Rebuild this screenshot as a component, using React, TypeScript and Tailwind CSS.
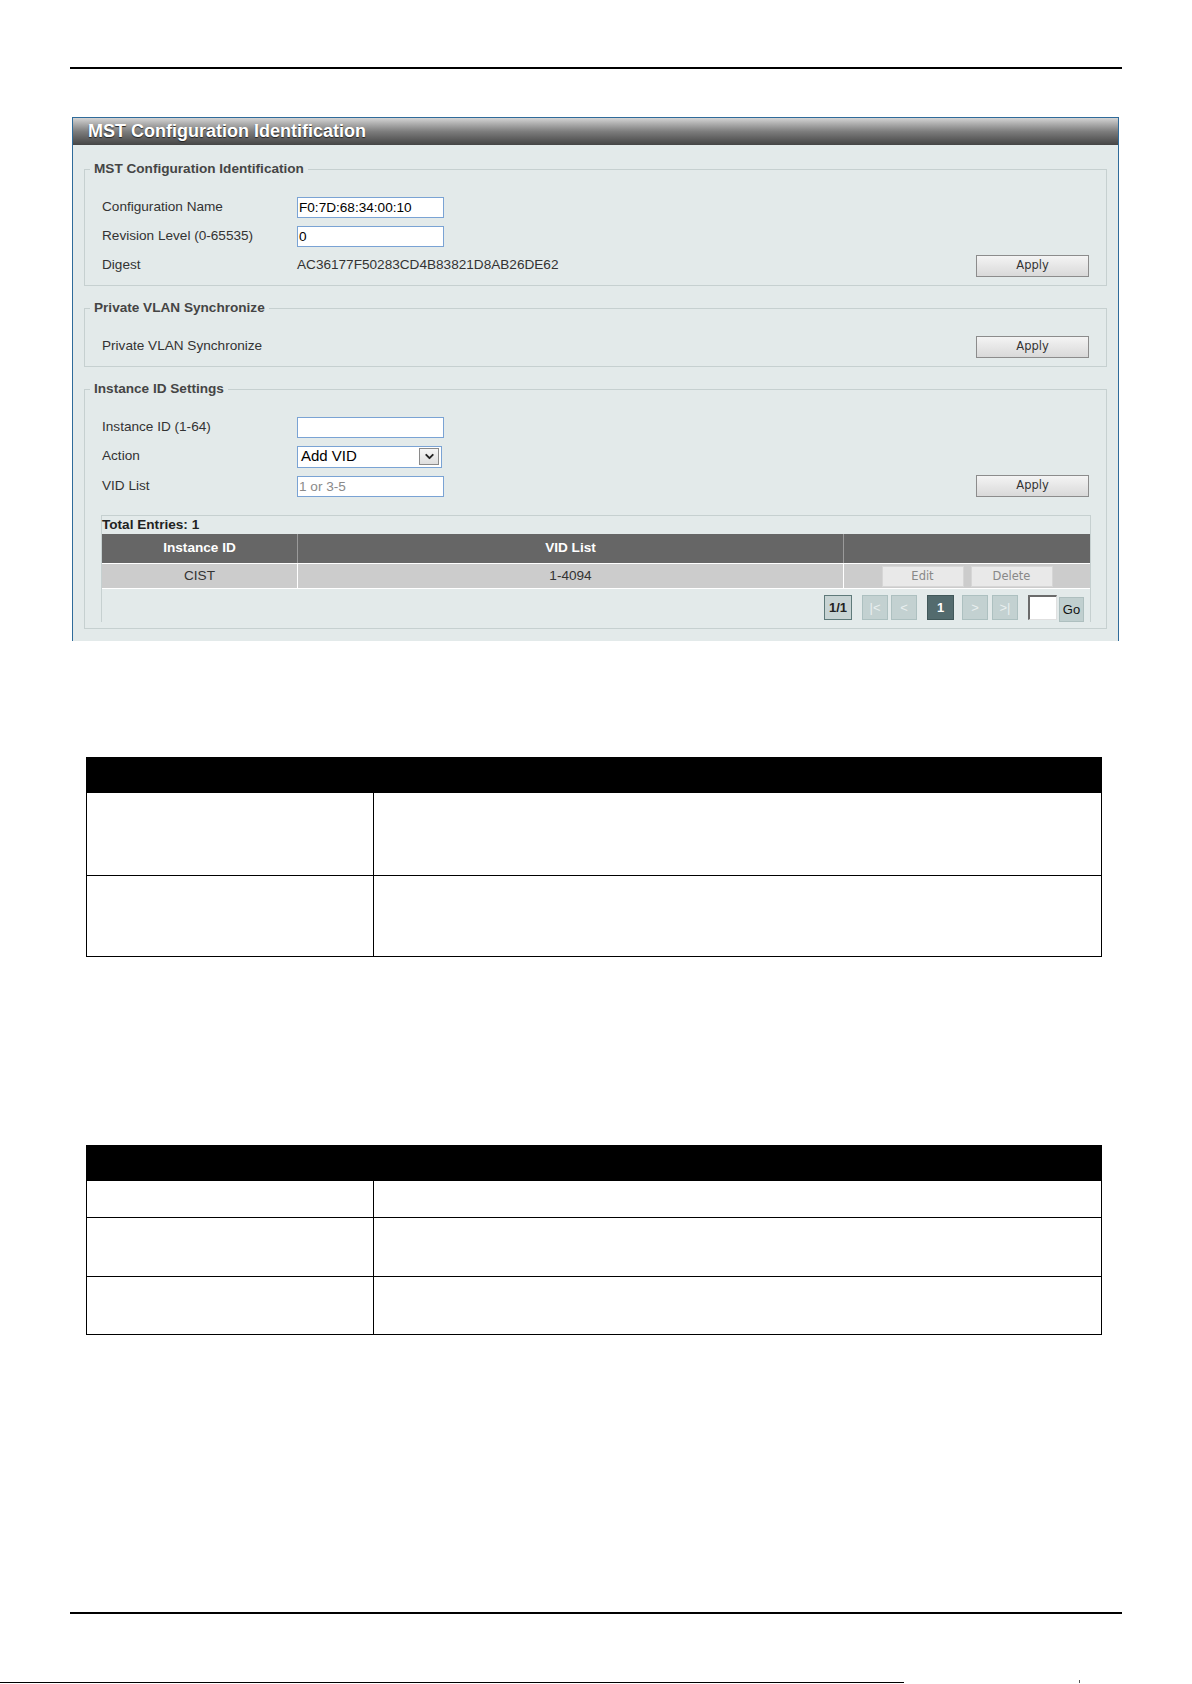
import { ChevronDown } from 'lucide-react';

const label = 'w-[195px] shrink-0 text-[13.6px] text-[#333]';
const field = 'w-[147px] h-[21px] border border-[#7aa3d4] bg-white px-[1px] text-[13.6px] leading-[19px]';

function ApplyButton() {
  return (
    <button className="ml-auto w-[113px] h-[22px] border border-[#8c8c8c] bg-gradient-to-b from-[#f4f4f4] to-[#d9d9d9] font-['DejaVu_Sans',sans-serif] text-[11.5px] text-[#333]">
      Apply
    </button>
  );
}

function Group({ title, className, children }: { title: string; className: string; children: React.ReactNode }) {
  return (
    <fieldset className={`border border-[#c6d0d0] px-[17px] ${className}`}>
      <legend className="-ml-[12px] px-[4px] text-[13.6px] leading-[16px] font-bold text-[#454545]">{title}</legend>
      {children}
    </fieldset>
  );
}

function PageBox({ children, tone }: { children: React.ReactNode; tone: 'off' | 'on' | 'count' | 'go' }) {
  const styles = {
    off: 'w-[26px] bg-[#c3d1d1] border-[#adc0c0] text-[#e9efef]',
    on: 'w-[27px] bg-[#536b6e] border-[#41585a] text-white font-bold',
    count: 'w-[28px] bg-[#c8d4d4] border-[#5f7a7a] text-[#222] font-bold border-[1.5px]',
    go: 'w-[25px] bg-[#c0cfcf] border-[#aebfbf] text-[#111]',
  }[tone];
  return (
    <div className={`h-[25px] flex items-center justify-center border text-[13px] ${styles}`}>{children}</div>
  );
}

function DocTable({ rows, className }: { rows: number[]; className: string }) {
  return (
    <div className={`shrink-0 ml-[86px] w-[1016px] border-x border-b border-black ${className}`}>
      <div className="h-[36px] bg-black" />
      {rows.map((h, i) => (
        <div
          key={i}
          className={`grid grid-cols-[287px_1fr] ${i > 0 ? 'border-t border-black' : ''}`}
          style={{ height: h }}
        >
          <div className="border-r-[1.5px] border-black" />
          <div />
        </div>
      ))}
    </div>
  );
}

export default function App() {
  return (
    <div className="w-[1192px] h-[1684px] bg-white flex flex-col overflow-hidden font-['Liberation_Sans',Arial,sans-serif]">
      <div className="shrink-0 mt-[67px] mx-[70px] h-[2px] bg-black" />

      <section className="shrink-0 mt-[48px] ml-[72px] w-[1047px] h-[524px] flex flex-col border-t border-x border-[#2f6b9a]">
        <div className="h-[27px] shrink-0 flex items-center pl-[15px] bg-gradient-to-b from-[#d4d4d4] via-[#7d7d7d] to-[#454545]">
          <h1 className="text-[18px] font-bold text-white leading-none -mt-px [text-shadow:0_1px_1px_#222]">
            MST Configuration Identification
          </h1>
        </div>

        <div className="flex-1 bg-[#e3eaea] px-[11px] pb-[11px] flex flex-col">
          <Group title="MST Configuration Identification" className="mt-[16px] pt-[16px] pb-[5px]">
            <div className="h-[29px] flex items-center">
              <span className={label}>Configuration Name</span>
              <div className={`${field} text-black`}>F0:7D:68:34:00:10</div>
            </div>
            <div className="h-[29px] flex items-center">
              <span className={label}>Revision Level (0-65535)</span>
              <div className={`${field} text-black`}>0</div>
            </div>
            <div className="h-[29px] flex items-center">
              <span className={label}>Digest</span>
              <span className="text-[13.6px] text-[#333]">AC36177F50283CD4B83821D8AB26DE62</span>
              <ApplyButton />
            </div>
          </Group>

          <Group title="Private VLAN Synchronize" className="mt-[14px] pt-[16px] pb-[5px]">
            <div className="h-[29px] flex items-center">
              <span className={label}>Private VLAN Synchronize</span>
              <ApplyButton />
            </div>
          </Group>

          <Group title="Instance ID Settings" className="mt-[14px] pt-[15px] pb-[6px]">
            <div className="h-[30px] flex items-center">
              <span className={label}>Instance ID (1-64)</span>
              <div className={field} />
            </div>
            <div className="h-[29px] flex items-center">
              <span className={label}>Action</span>
              <div className="w-[145px] h-[22px] flex items-center justify-between border border-[#7aa3d4] bg-white pl-[3px] pr-[2px]">
                <span className="text-[15px] text-black">Add VID</span>
                <span className="w-[20px] h-[17px] flex items-center justify-center border border-[#8a8a8a] bg-gradient-to-b from-[#f6f6f6] to-[#dedede]">
                  <ChevronDown size={13} strokeWidth={3.5} className="text-[#222]" />
                </span>
              </div>
            </div>
            <div className="h-[30px] flex items-center">
              <span className={label}>VID List</span>
              <div className={`${field} text-[#8a8a8a]`}>1 or 3-5</div>
              <ApplyButton />
            </div>

            <div className="mt-[14px] -ml-px -mr-[2px] border-t border-x border-[#c6d0d0]">
              <div className="h-[18px] flex items-center text-[13.6px] font-bold text-[#222]">Total Entries: 1</div>
              <div className="grid grid-cols-[196px_546px_1fr] h-[29px] bg-[#666666] text-white text-[13.6px] font-bold">
                <div className="flex items-center justify-center border-r border-[#9a9a9a]">Instance ID</div>
                <div className="flex items-center justify-center border-r border-[#9a9a9a]">VID List</div>
                <div />
              </div>
              <div className="grid grid-cols-[196px_546px_1fr] h-[26px] bg-[#cccccc] text-[13.6px] text-[#333] border-t border-b border-white">
                <div className="flex items-center justify-center border-r border-white">CIST</div>
                <div className="flex items-center justify-center border-r border-white">1-4094</div>
                <div className="flex items-center justify-center gap-[7px] pt-[1px] font-['DejaVu_Sans',sans-serif] text-[11.5px] text-[#888]">
                  <button className="w-[82px] h-[21px] bg-[#e9e9e9] border border-[#d6d6d6]">Edit</button>
                  <button className="w-[82px] h-[21px] bg-[#e9e9e9] border border-[#d6d6d6]">Delete</button>
                </div>
              </div>
              <div className="h-[33px] pt-[6px] pr-[6px] flex items-start justify-end">
                <PageBox tone="count">1/1</PageBox>
                <div className="ml-[10px] flex gap-[3px]">
                  <PageBox tone="off">|&lt;</PageBox>
                  <PageBox tone="off">&lt;</PageBox>
                </div>
                <div className="ml-[10px]">
                  <PageBox tone="on">1</PageBox>
                </div>
                <div className="ml-[8px] flex gap-[4px]">
                  <PageBox tone="off">&gt;</PageBox>
                  <PageBox tone="off">&gt;|</PageBox>
                </div>
                <div className="ml-[10px] w-[29px] h-[25px] bg-white border-t-2 border-l-2 border-[#6b6b6b] border-r border-b border-r-[#e0e0e0] border-b-[#e0e0e0]" />
                <div className="ml-[2px] mt-[2px]">
                  <PageBox tone="go">Go</PageBox>
                </div>
              </div>
            </div>
          </Group>
        </div>
      </section>

      <DocTable rows={[82, 81]} className="mt-[116px]" />
      <DocTable rows={[36, 59, 58]} className="mt-[188px]" />

      <div className="shrink-0 mt-[277px] mx-[70px] h-[2px] bg-black" />
      <div className="shrink-0 mt-[66px] flex items-end">
        <div className="w-[904px] h-px bg-black" />
        <div className="ml-[175px] w-px h-[3px] bg-[#555]" />
      </div>
    </div>
  );
}
